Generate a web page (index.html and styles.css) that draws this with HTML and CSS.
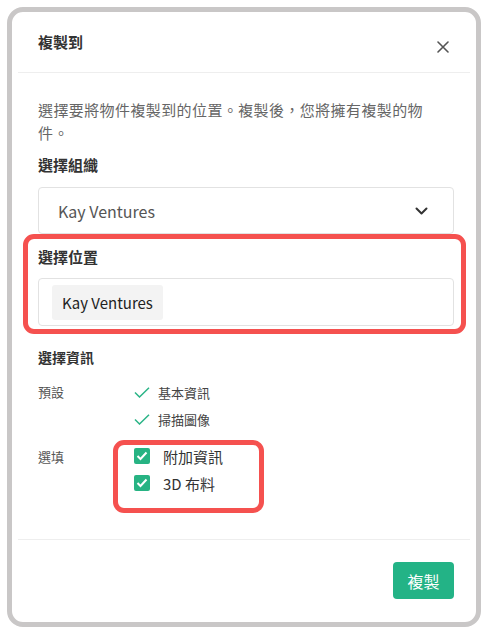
FILE: index.html
```html
<!DOCTYPE html>
<html lang="zh-Hant">
<head>
  <meta charset="UTF-8">
  <meta name="viewport" content="width=device-width, initial-scale=1.0">
  <title>複製到</title>
  <link rel="stylesheet" href="styles.css">
</head>
<body>
  <div class="frame">
    <div class="dialog">
      <div class="dialog-header">
        <h2 class="dialog-title">複製到</h2>
        <button class="close-btn" aria-label="關閉">
          <svg width="12" height="12" viewBox="0 0 12 12"><path d="M1 1L11 11M11 1L1 11" stroke="#555" stroke-width="1.6" stroke-linecap="round"/></svg>
        </button>
      </div>

      <div class="dialog-body">
        <p class="desc">選擇要將物件複製到的位置。複製後，您將擁有複製的物件。</p>

        <div class="field-label">選擇組織</div>
        <div class="select">
          <span>Kay Ventures</span>
          <svg width="13" height="8" viewBox="0 0 13 8"><path d="M1.5 1.5L6.5 6.5L11.5 1.5" fill="none" stroke="#333" stroke-width="2" stroke-linecap="round" stroke-linejoin="round"/></svg>
        </div>

        <div class="highlight highlight-location">
          <div class="field-label">選擇位置</div>
          <div class="tag-input">
            <span class="chip">Kay Ventures</span>
          </div>
        </div>

        <div class="section-title">選擇資訊</div>

        <div class="info-row">
          <div class="info-label">預設</div>
          <div class="info-values">
            <div class="default-item">
              <svg width="16" height="11" viewBox="0 0 16 11"><path d="M1 5.5L5.5 10L15 0.8" fill="none" stroke="#2bb487" stroke-width="1.5"/></svg>
              <span>基本資訊</span>
            </div>
            <div class="default-item">
              <svg width="16" height="11" viewBox="0 0 16 11"><path d="M1 5.5L5.5 10L15 0.8" fill="none" stroke="#2bb487" stroke-width="1.5"/></svg>
              <span>掃描圖像</span>
            </div>
          </div>
        </div>

        <div class="info-row optional-row">
          <div class="info-label">選填</div>
          <div class="highlight highlight-options">
            <label class="check-item">
              <span class="checkbox"><svg width="12" height="10" viewBox="0 0 12 10"><path d="M1.5 5L4.5 8L10.5 1.5" fill="none" stroke="#fff" stroke-width="2"/></svg></span>
              <span>附加資訊</span>
            </label>
            <label class="check-item">
              <span class="checkbox"><svg width="12" height="10" viewBox="0 0 12 10"><path d="M1.5 5L4.5 8L10.5 1.5" fill="none" stroke="#fff" stroke-width="2"/></svg></span>
              <span>3D 布料</span>
            </label>
          </div>
        </div>
      </div>

      <div class="dialog-footer">
        <button class="primary-btn">複製</button>
      </div>
    </div>
  </div>
</body>
</html>
```

FILE: styles.css
```css
/* Copy dialog */
* {
  box-sizing: border-box;
}

body {
  margin: 0;
  background: #fff;
  font-family: "Noto Sans CJK TC", "Noto Sans", sans-serif;
  color: #333;
}

.frame {
  width: 474px;
  height: 620px;
  margin: 7px 0 0 7px;
  border: 5px solid #c9c7c7;
  border-radius: 16px;
  background: #fff;
  padding: 0 6px;
}

.dialog {
  height: 100%;
  display: flex;
  flex-direction: column;
}

.dialog-header {
  height: 61px;
  display: flex;
  align-items: center;
  justify-content: space-between;
  padding: 0 21px 0 20px;
  border-bottom: 1px solid #eeeeee;
}

.dialog-title {
  margin: 0;
  font-size: 15px;
  font-weight: bold;
  color: #333;
  line-height: 22px;
}

.close-btn {
  border: 0;
  background: none;
  padding: 0;
  width: 12px;
  height: 12px;
  margin-top: 9px;
  display: flex;
}

.dialog-body {
  flex: 1;
  padding: 25px 16px 0 20px;
}

.desc {
  margin: 0;
  width: 396px;
  font-size: 15px;
  letter-spacing: 0.4px;
  line-height: 23px;
  color: #666;
}

.field-label {
  margin-top: 10px;
  font-size: 15px;
  font-weight: bold;
  line-height: 22px;
  color: #333;
}

.select {
  margin-top: 11px;
  height: 47px;
  border: 1px solid #e2e2e2;
  border-radius: 4px;
  display: flex;
  align-items: center;
  justify-content: space-between;
  padding: 0 25px 0 19px;
  font-size: 16px;
  color: #555;
}

.highlight {
  border: 5px solid #f5514f;
  border-radius: 11px;
}

.highlight-location {
  margin: 0 -12px 0 -15px;
  padding: 7px 7px 3px 10px;
}

.highlight-location .field-label {
  margin-top: 0;
}

.tag-input {
  margin-top: 10px;
  height: 48px;
  border: 1px solid #e2e2e2;
  border-radius: 4px;
  display: flex;
  align-items: center;
  padding: 0 13px;
}

.chip {
  background: #f3f3f3;
  border-radius: 3px;
  height: 35px;
  display: flex;
  align-items: center;
  padding: 0 10px;
  font-size: 15px;
  color: #222;
}

.section-title {
  margin-top: 13px;
  font-size: 14px;
  font-weight: bold;
  line-height: 20px;
  color: #333;
}

.info-row {
  display: flex;
  margin-top: 15px;
}

.info-label {
  width: 96px;
  font-size: 13px;
  line-height: 20px;
  color: #555;
}

.default-item {
  display: flex;
  align-items: center;
  gap: 8px;
  height: 20px;
  font-size: 13px;
  color: #444;
  margin-bottom: 7px;
}

.optional-row {
  margin-top: 4px;
}

.optional-row .info-label {
  margin-top: 7px;
}

.highlight-options {
  margin-left: -21px;
  width: 151px;
  height: 73px;
  padding: 0 0 0 16px;
}

.check-item {
  display: flex;
  align-items: center;
  gap: 13px;
  height: 22px;
  margin-bottom: 5px;
  font-size: 15px;
  color: #333;
}

.checkbox {
  width: 16px;
  height: 16px;
  border-radius: 2px;
  background: #27b383;
  display: flex;
  align-items: center;
  justify-content: center;
}

.dialog-footer {
  border-top: 1px solid #eeeeee;
  padding: 22px 16px 23px 0;
  display: flex;
  justify-content: flex-end;
}

.primary-btn {
  width: 61px;
  height: 37px;
  border: 0;
  border-radius: 4px;
  background: #23b386;
  color: #fff;
  font-family: inherit;
  font-size: 16px;
}
```
